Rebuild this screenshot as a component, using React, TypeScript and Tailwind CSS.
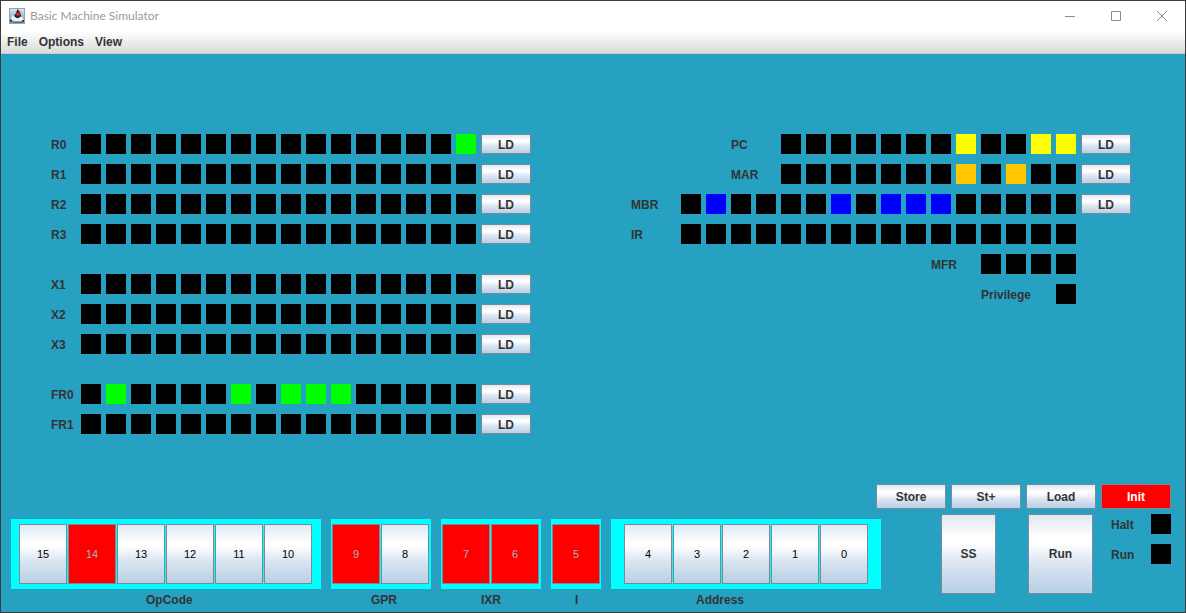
import { useState } from "react";

const metal =
  "border border-[#7a8a99] bg-[linear-gradient(to_bottom,#dde8f3_0%,#ffffff_30%,#ffffff_36%,#dde6f2_60%,#b8cfe5_100%)]";

type Tone = "green" | "yellow" | "amber" | "blue" | "none";

const toneClass: Record<Tone, string> = {
  green: "bg-[#00ff00]",
  yellow: "bg-[#ffff00]",
  amber: "bg-[#ffc800]",
  blue: "bg-[#0000ff]",
  none: "bg-black",
};

type Register = { name: string; bits: string; tone: Tone; load: boolean; labelClass: string };

const zeros = "0000000000000000";

const general: Register[][] = [
  [
    { name: "R0", bits: "0000000000000001", tone: "green", load: true, labelClass: "w-[30px]" },
    { name: "R1", bits: zeros, tone: "green", load: true, labelClass: "w-[30px]" },
    { name: "R2", bits: zeros, tone: "green", load: true, labelClass: "w-[30px]" },
    { name: "R3", bits: zeros, tone: "green", load: true, labelClass: "w-[30px]" },
  ],
  [
    { name: "X1", bits: zeros, tone: "green", load: true, labelClass: "w-[30px]" },
    { name: "X2", bits: zeros, tone: "green", load: true, labelClass: "w-[30px]" },
    { name: "X3", bits: zeros, tone: "green", load: true, labelClass: "w-[30px]" },
  ],
  [
    { name: "FR0", bits: "0100001011100000", tone: "green", load: true, labelClass: "w-[30px]" },
    { name: "FR1", bits: zeros, tone: "green", load: true, labelClass: "w-[30px]" },
  ],
];

const control: Register[] = [
  { name: "PC", bits: "000000010011", tone: "yellow", load: true, labelClass: "w-[50px]" },
  { name: "MAR", bits: "000000010100", tone: "amber", load: true, labelClass: "w-[50px]" },
  { name: "MBR", bits: "0100001011100000", tone: "blue", load: true, labelClass: "w-[50px]" },
  { name: "IR", bits: zeros, tone: "blue", load: false, labelClass: "w-[50px]" },
  { name: "MFR", bits: "0000", tone: "blue", load: false, labelClass: "w-[50px]" },
  { name: "Privilege", bits: "0", tone: "blue", load: false, labelClass: "w-[75px]" },
];

const groups = [
  { name: "OpCode", bits: [15, 14, 13, 12, 11, 10], box: "w-[310px] pl-2", label: "pl-[135px]" },
  { name: "GPR", bits: [9, 8], box: "w-[100px] pl-px", label: "pl-10" },
  { name: "IXR", bits: [7, 6], box: "w-[100px] pl-px", label: "pl-10" },
  { name: "I", bits: [5], box: "w-[50px] pl-px", label: "pl-6" },
  { name: "Address", bits: [4, 3, 2, 1, 0], box: "w-[270px] pl-[13px]", label: "pl-[85px]" },
];

function Lamp({ tone = "none" }: { tone?: Tone }) {
  return <span className={`block size-5 shrink-0 ${toneClass[tone]}`} />;
}

function RegisterRow({ reg }: { reg: Register }) {
  return (
    <div className="flex h-5 items-center">
      <span className={`shrink-0 pt-[2px] ${reg.labelClass}`}>{reg.name}</span>
      <div className="flex gap-[5px]">
        {reg.bits.split("").map((bit, i) => (
          <Lamp key={i} tone={bit === "1" ? reg.tone : "none"} />
        ))}
      </div>
      <div className="ml-[5px] w-[50px]">
        {reg.load && (
          <button type="button" aria-label={`LD ${reg.name}`} className={`block h-5 w-full pt-[2px] ${metal}`}>
            LD
          </button>
        )}
      </div>
    </div>
  );
}

function AppIcon() {
  return (
    <svg width="16" height="16" viewBox="0 0 16 16" aria-hidden="true">
      <defs>
        <linearGradient id="tile" x1="0" y1="0" x2="0" y2="1">
          <stop offset="0" stopColor="#dce8f0" />
          <stop offset="1" stopColor="#6f91ad" />
        </linearGradient>
      </defs>
      <rect x="0.5" y="0.5" width="15" height="15" fill="url(#tile)" stroke="#8ea5b6" />
      <path d="M8.500 1 11 4l1.500 5-1.500 1.500H5.500L5 8l2-3Z" fill="#24272b" />
      <path d="M5 8.500 8.500 10.500 12 8.500l1 5.500H4Z" fill="#eef1f3" />
      <path d="M1.500 11 4 7.500l1.500.5L4.500 11.500 2.500 13Z" fill="#f7f8f8" />
      <path d="M12 8l2.500 3-.5 2-2-1.500Z" fill="#f7f8f8" />
      <path d="M1 11.500h2v2.500H1ZM13 12h2v2h-2ZM4 13.500h9v1H4Z" fill="#3c444b" />
      <ellipse cx="9" cy="6" rx="2" ry="1.700" fill="#e3242b" />
    </svg>
  );
}

export default function App() {
  const [active, setActive] = useState<number[]>([14, 9, 7, 6, 5]);
  const toggle = (bit: number) =>
    setActive((now) => (now.includes(bit) ? now.filter((b) => b !== bit) : [...now, bit]));

  return (
    <div className="flex min-h-screen flex-col border border-[#3b3b3b] bg-[#27a1c2] font-['Liberation_Sans',Arial,sans-serif] text-xs leading-[14px] font-bold text-[#333333]">
      <header className="flex h-[30px] shrink-0 items-center bg-white pl-2">
        <AppIcon />
        <h1 className="ml-[5px] flex-1 font-[Lato,'Open_Sans',sans-serif] text-xs font-normal text-[#999999]">
          Basic Machine Simulator
        </h1>
        <div className="flex h-full">
          <button type="button" aria-label="Minimize" className="flex w-[46px] items-center justify-center">
            <svg width="10" height="10" viewBox="0 0 10 10" stroke="#8e8e8e">
              <path d="M0 5.500H10" />
            </svg>
          </button>
          <button type="button" aria-label="Maximize" className="flex w-[46px] items-center justify-center">
            <svg width="10" height="10" viewBox="0 0 10 10" fill="none" stroke="#8e8e8e">
              <path d="M.5.5h9v9h-9Z" />
            </svg>
          </button>
          <button type="button" aria-label="Close" className="flex w-[46px] items-center justify-center">
            <svg width="10" height="10" viewBox="0 0 10 10" stroke="#8e8e8e">
              <path d="m0 0 10 10M10 0 0 10" />
            </svg>
          </button>
        </div>
      </header>
      <nav className="flex h-[23px] shrink-0 items-center gap-[11px] border-b border-[#cccccc] bg-linear-to-b from-white to-[#dadada] pl-[6px]">
        <button type="button">File</button>
        <button type="button">Options</button>
        <button type="button">View</button>
      </nav>

      <main className="flex flex-1 flex-col pt-20">
        <div className="flex justify-between pr-[54px] pl-[50px]">
          <section aria-label="General registers" className="flex flex-col gap-[30px]">
            {general.map((block) => (
              <div key={block[0].name} className="flex flex-col gap-[10px]">
                {block.map((reg) => (
                  <RegisterRow key={reg.name} reg={reg} />
                ))}
              </div>
            ))}
          </section>
          <section aria-label="Control registers" className="flex flex-col items-end gap-[10px]">
            {control.map((reg) => (
              <RegisterRow key={reg.name} reg={reg} />
            ))}
          </section>
        </div>

        <div className="mt-auto pt-10 pr-[14px] pb-[5px] pl-[10px]">
          <div className="flex justify-end gap-[5px]">
            <button type="button" className={`h-[25px] w-[70px] ${metal}`}>Store</button>
            <button type="button" className={`h-[25px] w-[70px] ${metal}`}>St+</button>
            <button type="button" className={`h-[25px] w-[70px] ${metal}`}>Load</button>
            <button type="button" className="h-[25px] w-[70px] border border-[#7a8a99] bg-[#ff0000] text-white">
              Init
            </button>
          </div>

          <div className="mt-[5px] flex items-start justify-between">
            <section aria-label="Switches" className="flex gap-[10px] pt-[5px]">
              {groups.map((group) => (
                <div key={group.name}>
                  <div className={`flex h-[70px] items-center gap-px bg-[#00ffff] ${group.box}`}>
                    {group.bits.map((bit) => {
                      const on = active.includes(bit);
                      return (
                        <button
                          key={bit}
                          type="button"
                          aria-pressed={on}
                          onClick={() => toggle(bit)}
                          className={`h-[60px] w-12 shrink-0 text-[11px] font-normal ${
                            on ? "border border-[#7a8a99] bg-[#ff0000] text-[#a3b8b8]" : `${metal} text-black`
                          }`}
                        >
                          {bit}
                        </button>
                      );
                    })}
                  </div>
                  <p className={`mt-1 ${group.label}`}>{group.name}</p>
                </div>
              ))}
            </section>

            <section aria-label="Machine controls" className="flex items-start">
              <button type="button" className={`h-20 w-[55px] ${metal}`}>SS</button>
              <button type="button" className={`ml-8 h-20 w-[65px] ${metal}`}>Run</button>
              <div className="ml-[18px] flex w-[60px] flex-col gap-[10px]">
                <div className="flex items-center justify-between">
                  <span className="pt-[2px]">Halt</span>
                  <Lamp />
                </div>
                <div className="flex items-center justify-between">
                  <span className="pt-[2px]">Run</span>
                  <Lamp />
                </div>
              </div>
            </section>
          </div>
        </div>
      </main>
    </div>
  );
}
